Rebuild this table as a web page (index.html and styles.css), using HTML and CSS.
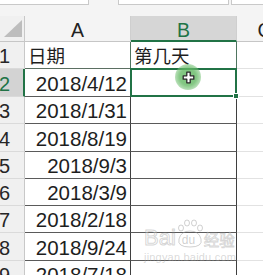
FILE: index.html
```html
<!DOCTYPE html>
<html>
<head>
<meta charset="utf-8">
<link rel="stylesheet" href="styles.css">
</head>
<body>
<div class="screen">
  <div class="ribbon">
    <div class="box box-name"></div>
    <div class="box box-fx"></div>
    <div class="box box-end"></div>
  </div>
  <div class="sheet">
    <div class="corner"><svg width="24" height="25" viewBox="0 0 24 25"><polygon points="22,4 22,21 4,21" fill="#bdbdbd"/></svg></div>
    <div class="ch">A</div>
    <div class="ch sel">B</div>
    <div class="ch">C</div>

    <div class="rh">1</div>
    <div class="ca zh r1">日期</div>
    <div class="cb zh r1">第几天</div>
    <div class="cc"></div>

    <div class="rh sel">2</div>
    <div class="ca">2018/4/12</div>
    <div class="cb active"><span class="selection"></span><span class="handle"></span></div>
    <div class="cc"></div>

    <div class="rh">3</div>
    <div class="ca">2018/1/31</div>
    <div class="cb"></div>
    <div class="cc"></div>

    <div class="rh">4</div>
    <div class="ca">2018/8/19</div>
    <div class="cb"></div>
    <div class="cc"></div>

    <div class="rh">5</div>
    <div class="ca">2018/9/3</div>
    <div class="cb"></div>
    <div class="cc"></div>

    <div class="rh">6</div>
    <div class="ca">2018/3/9</div>
    <div class="cb"></div>
    <div class="cc"></div>

    <div class="rh">7</div>
    <div class="ca">2018/2/18</div>
    <div class="cb"></div>
    <div class="cc"></div>

    <div class="rh">8</div>
    <div class="ca">2018/9/24</div>
    <div class="cb"></div>
    <div class="cc"></div>

    <div class="rh">9</div>
    <div class="ca">2018/7/18</div>
    <div class="cb"></div>
    <div class="cc"></div>
  </div>

  <div class="cursor">
    <svg class="plus" width="13" height="13" viewBox="0 0 13 13"><polygon points="4.8,1.2 8.2,1.2 8.2,4.8 11.8,4.8 11.8,8.2 8.2,8.2 8.2,11.8 4.8,11.8 4.8,8.2 1.2,8.2 1.2,4.8 4.8,4.8" fill="#fff" stroke="#2a2a2a" stroke-width="1.3" stroke-linejoin="round"/></svg>
  </div>

  <div class="watermark">
    <div class="wm-line">
      <span class="wm-bai">Bai</span>
      <span class="wm-paw">
        <svg width="28" height="30" viewBox="0 0 28 30"><g fill="none" stroke="rgba(150,150,150,0.45)" stroke-width="1"><ellipse cx="5" cy="9" rx="2.5" ry="3"/><ellipse cx="11" cy="4" rx="2.5" ry="3"/><ellipse cx="18" cy="4" rx="2.5" ry="3"/><ellipse cx="24" cy="9" rx="2.5" ry="3"/><path d="M3 20 Q5 12 14 12 Q23 12 25 20 Q27 28 14 28 Q1 28 3 20 Z"/></g></svg>
        <span class="wm-du">du</span>
      </span>
      <span class="wm-jy">经验</span>
    </div>
    <div class="wm-url">jingyan.baidu.com</div>
  </div>
</div>
</body>
</html>
```

FILE: styles.css
```css
html, body {
  margin: 0;
  padding: 0;
}

body {
  width: 263px;
  height: 275px;
  overflow: hidden;
  background: #fff;
}

.screen {
  position: relative;
  width: 263px;
  height: 275px;
  overflow: hidden;
  font-family: "Liberation Sans", Arial, sans-serif;
  color: #1e1e1e;
}

.ribbon {
  height: 16px;
  background: #f4f4f4;
  display: flex;
  align-items: flex-start;
}

.box {
  height: 5px;
  background: #fff;
  border: 1px solid #c9c9c9;
  border-top: none;
  box-sizing: border-box;
  flex: none;
}

.box-name {
  width: 90px;
  margin-left: -1px;
}

.box-fx {
  width: 111px;
  margin-left: 29px;
}

.box-end {
  flex: 1;
  margin-left: 2px;
  margin-right: -2px;
}

.sheet {
  display: grid;
  grid-template-columns: 25px 106px 106px 56px;
  grid-template-rows: 26px 27px 28px 27px 28px 27px 27px 27px 28px 27px;
}

.sheet > div {
  box-sizing: border-box;
  display: flex;
  align-items: flex-end;
  min-width: 0;
  overflow: hidden;
  white-space: nowrap;
  line-height: 1;
}

.corner {
  background: #f0f0f0;
  border-right: 1px solid #c8c8c8;
  border-bottom: 1px solid #c6c6c6;
}

.ch {
  background: #f4f4f4;
  border-right: 1px solid #cfcfcf;
  border-bottom: 1px solid #c6c6c6;
  justify-content: center;
  font-size: 19.5px;
  padding-bottom: 1px;
  color: #222;
}

.ch.sel {
  background: #d6d6d6;
  color: #217346;
  border-bottom: 2px solid #217346;
  padding-bottom: 0;
}

.rh {
  background: #f0f0f0;
  border-right: 1px solid #c8c8c8;
  border-bottom: 1px solid #dadada;
  justify-content: flex-end;
  padding: 0 14px 2px 0;
  font-size: 20px;
  color: #262626;
}

.rh.sel {
  background: #d3d3d3;
  color: #217346;
  border-right: 2px solid #217346;
  padding-right: 13px;
}

.ca {
  border-right: 1px solid #3f3f3f;
  border-bottom: 1px solid #5a5a5a;
  justify-content: flex-end;
  padding: 0 3px 2px 0;
  font-size: 20.5px;
}

.cb {
  border-right: 1px solid #3f3f3f;
  border-bottom: 1px solid #5a5a5a;
}

.cc {
  border-bottom: 1px solid #e2e2e2;
}

.sheet > .zh {
  font-family: "Noto Sans CJK SC", sans-serif;
  font-size: 18.5px;
  justify-content: flex-start;
  padding: 0 0 4px 3px;
}

.r1 {
  border-right-color: #4f7560;
  border-bottom-color: #5b6f62;
}

.sheet > .active {
  position: relative;
  overflow: visible;
}

.selection {
  position: absolute;
  top: -1px;
  left: -1px;
  right: -1px;
  bottom: -1px;
  border: 2px solid #217346;
}

.handle {
  position: absolute;
  right: -3px;
  bottom: -3px;
  width: 6px;
  height: 6px;
  box-sizing: border-box;
  background: #217346;
  border: 1px solid #fff;
  z-index: 2;
}

.cursor {
  position: absolute;
  left: 175px;
  top: 64px;
  width: 26px;
  height: 26px;
  border-radius: 50%;
  background: radial-gradient(circle, rgba(100, 185, 100, 0.85) 0, rgba(100, 185, 100, 0.8) 45%, rgba(120, 195, 120, 0.45) 75%, rgba(150, 210, 150, 0) 100%);
  display: flex;
  align-items: center;
  justify-content: center;
}

.plus {
  display: block;
}

.watermark {
  position: absolute;
  left: 144px;
  top: 218px;
  width: 100px;
  color: rgba(255, 255, 255, 0.5);
}

.wm-line {
  display: flex;
  align-items: flex-end;
  height: 31px;
}

.wm-bai {
  font-size: 22px;
  line-height: 1;
  -webkit-text-stroke: 1px rgba(150, 150, 150, 0.4);
  color: rgba(255, 255, 255, 0.3);
}

.wm-paw {
  position: relative;
  width: 28px;
  height: 30px;
  flex: none;
}

.wm-paw svg {
  display: block;
}

.wm-du {
  position: absolute;
  left: 6px;
  bottom: 3px;
  font-size: 12px;
  line-height: 1;
  color: rgba(150, 150, 150, 0.45);
}

.wm-jy {
  font-family: "Noto Sans CJK SC", sans-serif;
  font-size: 15.5px;
  line-height: 1;
  margin-bottom: 2px;
  -webkit-text-stroke: 0.8px rgba(150, 150, 150, 0.4);
  color: rgba(255, 255, 255, 0.3);
}

.wm-url {
  font-size: 11px;
  line-height: 1;
  margin-top: 3px;
  color: rgba(160, 160, 160, 0.4);
  letter-spacing: 0.2px;
}
```
